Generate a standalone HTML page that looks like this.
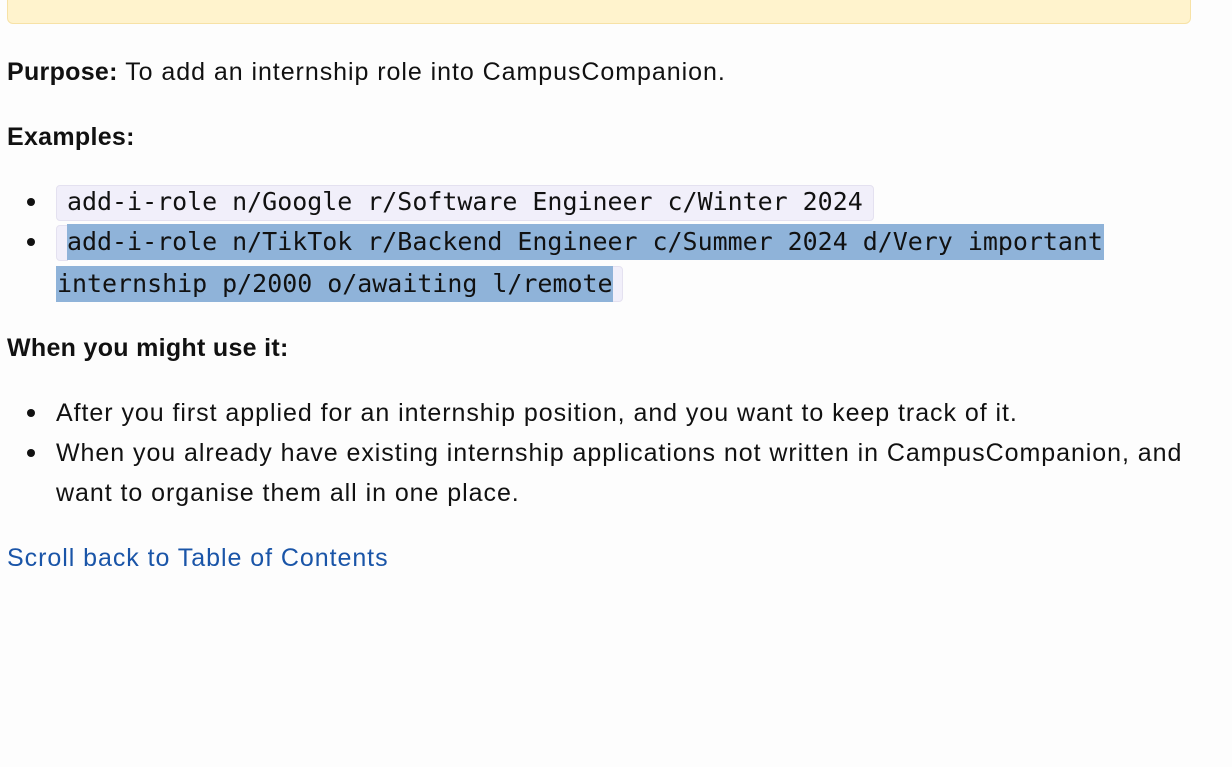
<!DOCTYPE html>
<html><head><meta charset="utf-8"><style>
html,body{margin:0;padding:0;background:#fdfdfd;width:1232px;height:767px;overflow:hidden}
body{font-family:"Liberation Sans","DejaVu Sans",sans-serif;font-size:25px;letter-spacing:0.95px;color:#111;position:relative}
.warn{position:absolute;left:7px;top:-20px;width:1182px;height:42px;background:#fff3cd;border:1px solid #f7e2a6;border-radius:6px}
.l{position:absolute;left:7px;line-height:40px;white-space:nowrap}
b{font-weight:bold;letter-spacing:0.3px}
.li{position:absolute;left:56px;line-height:40px;white-space:nowrap}
.dot{position:absolute;left:27px;width:8px;height:8px;border-radius:50%;background:#111}
.cl{position:absolute;font-family:"DejaVu Sans Mono","Liberation Mono",monospace;font-size:24.95px;letter-spacing:0;white-space:nowrap;line-height:36px}
a{color:#1a55a8;text-decoration:none}
</style></head><body>
<div class="warn"></div>
<div class="l" style="top:52px"><b>Purpose:</b> To add an internship role into CampusCompanion.</div>
<div class="l" style="top:117px"><b>Examples:</b></div>
<div class="dot" style="top:198px"></div>
<div style="position:absolute;left:56px;top:185px;width:816px;height:34px;background:#f1effa;border:1px solid #e4e1f0;border-radius:4px"></div>
<div class="cl" style="left:67px;top:184px">add-i-role n/Google r/Software Engineer c/Winter 2024</div>
<div class="dot" style="top:238px"></div>
<div style="position:absolute;left:56px;top:225px;width:10px;height:34px;background:#f1effa;border:1px solid #e4e1f0;border-radius:4px 0 0 4px"></div>
<div style="position:absolute;left:67px;top:224px;width:1037px;height:36px;background:#8fb3d9"></div>
<div class="cl" style="left:67px;top:224px">add-i-role n/TikTok r/Backend Engineer c/Summer 2024 d/Very important</div>
<div style="position:absolute;left:56px;top:266px;width:565px;height:34px;background:#f1effa;border:1px solid #e4e1f0;border-radius:0 4px 4px 0"></div>
<div style="position:absolute;left:56px;top:266px;width:557px;height:36px;background:#8fb3d9"></div>
<div class="cl" style="left:57px;top:266px">internship p/2000 o/awaiting l/remote</div>
<div class="l" style="top:328px"><b>When you might use it:</b></div>
<div class="dot" style="top:409px"></div>
<div class="li" style="top:393px">After you first applied for an internship position, and you want to keep track of it.</div>
<div class="dot" style="top:449px"></div>
<div class="li" style="top:433px">When you already have existing internship applications not written in CampusCompanion, and</div>
<div class="li" style="top:473px">want to organise them all in one place.</div>
<div class="l" style="top:538px"><a>Scroll back to Table of Contents</a></div>
</body></html>
